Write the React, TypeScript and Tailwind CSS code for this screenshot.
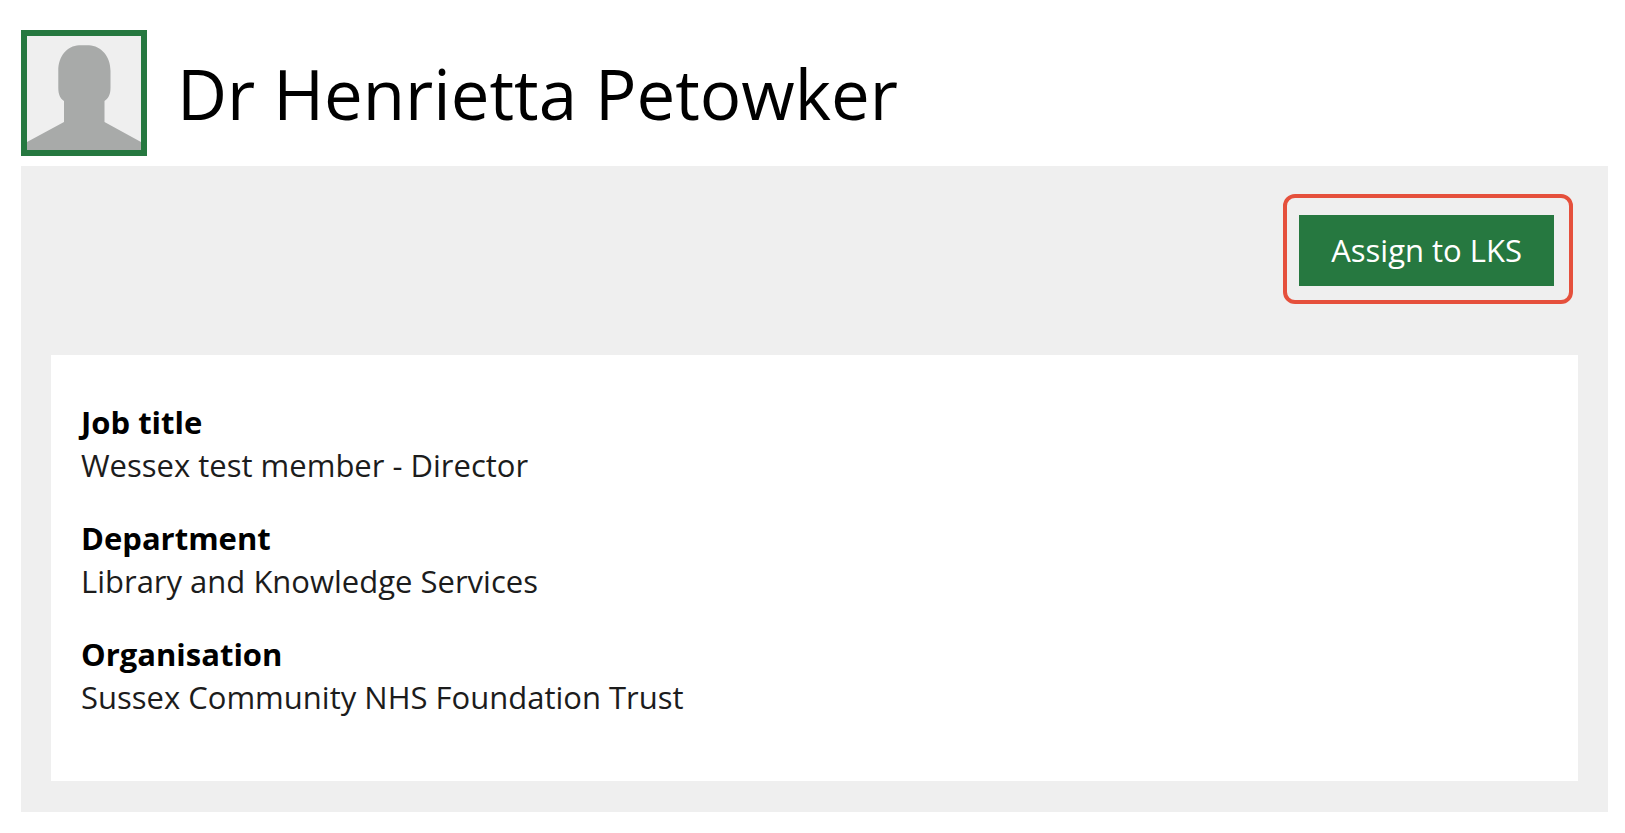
interface ProfileField {
  label: string;
  value: string;
}

const FIELDS: ProfileField[] = [
  { label: 'Job title', value: 'Wessex test member - Director' },
  { label: 'Department', value: 'Library and Knowledge Services' },
  { label: 'Organisation', value: 'Sussex Community NHS Foundation Trust' },
];

/** Placeholder silhouette for members without a photo. */
function Avatar() {
  return (
    <div className="h-[126px] w-[126px] shrink-0 border-[6px] border-[#267840] bg-[#efefef]">
      <svg viewBox="0 0 114 114" className="block h-full w-full" aria-hidden="true">
        <path
          fill="#a8aaa9"
          d="M52 9.3H62C74 10 83.500 20 83.500 35V52C83.500 59 81 62.500 77.500 65V86L114 106V114H0V106L37 86V65C33.500 62.500 31.300 59 31.300 52V35C31.300 20 40 10 52 9.300Z"
        />
      </svg>
    </div>
  );
}

function FieldList({ fields }: { fields: ProfileField[] }) {
  return (
    <dl className="flex flex-col gap-[30px] text-[31px] leading-[43px]">
      {fields.map((field) => (
        <div key={field.label}>
          <dt className="font-bold text-black">{field.label}</dt>
          <dd className="text-[#1c1c1c]">{field.value}</dd>
        </div>
      ))}
    </dl>
  );
}

export default function App() {
  return (
    <main className="min-h-screen bg-white pt-[30px] pr-[17px] pb-5 pl-[21px] font-['Open_Sans',sans-serif]">
      <header className="flex items-center gap-[30px]">
        <Avatar />
        <h1 className="text-[69px] leading-[94px] text-black">Dr Henrietta Petowker</h1>
      </header>

      <section className="mt-[10px] bg-[#efefef] px-[30px] pt-7 pb-[31px]">
        <div className="mr-[5px] flex justify-end">
          <div className="rounded-xl border-4 border-[#e5503c] pt-[17px] pr-[15px] pb-[14px] pl-3">
            <button
              type="button"
              className="block bg-[#267840] px-8 py-[14px] text-[31px] leading-[43px] text-white"
            >
              Assign to LKS
            </button>
          </div>
        </div>

        <div className="mt-[51px] bg-white px-[30px] pt-[46px] pb-[62px]">
          <FieldList fields={FIELDS} />
        </div>
      </section>
    </main>
  );
}
